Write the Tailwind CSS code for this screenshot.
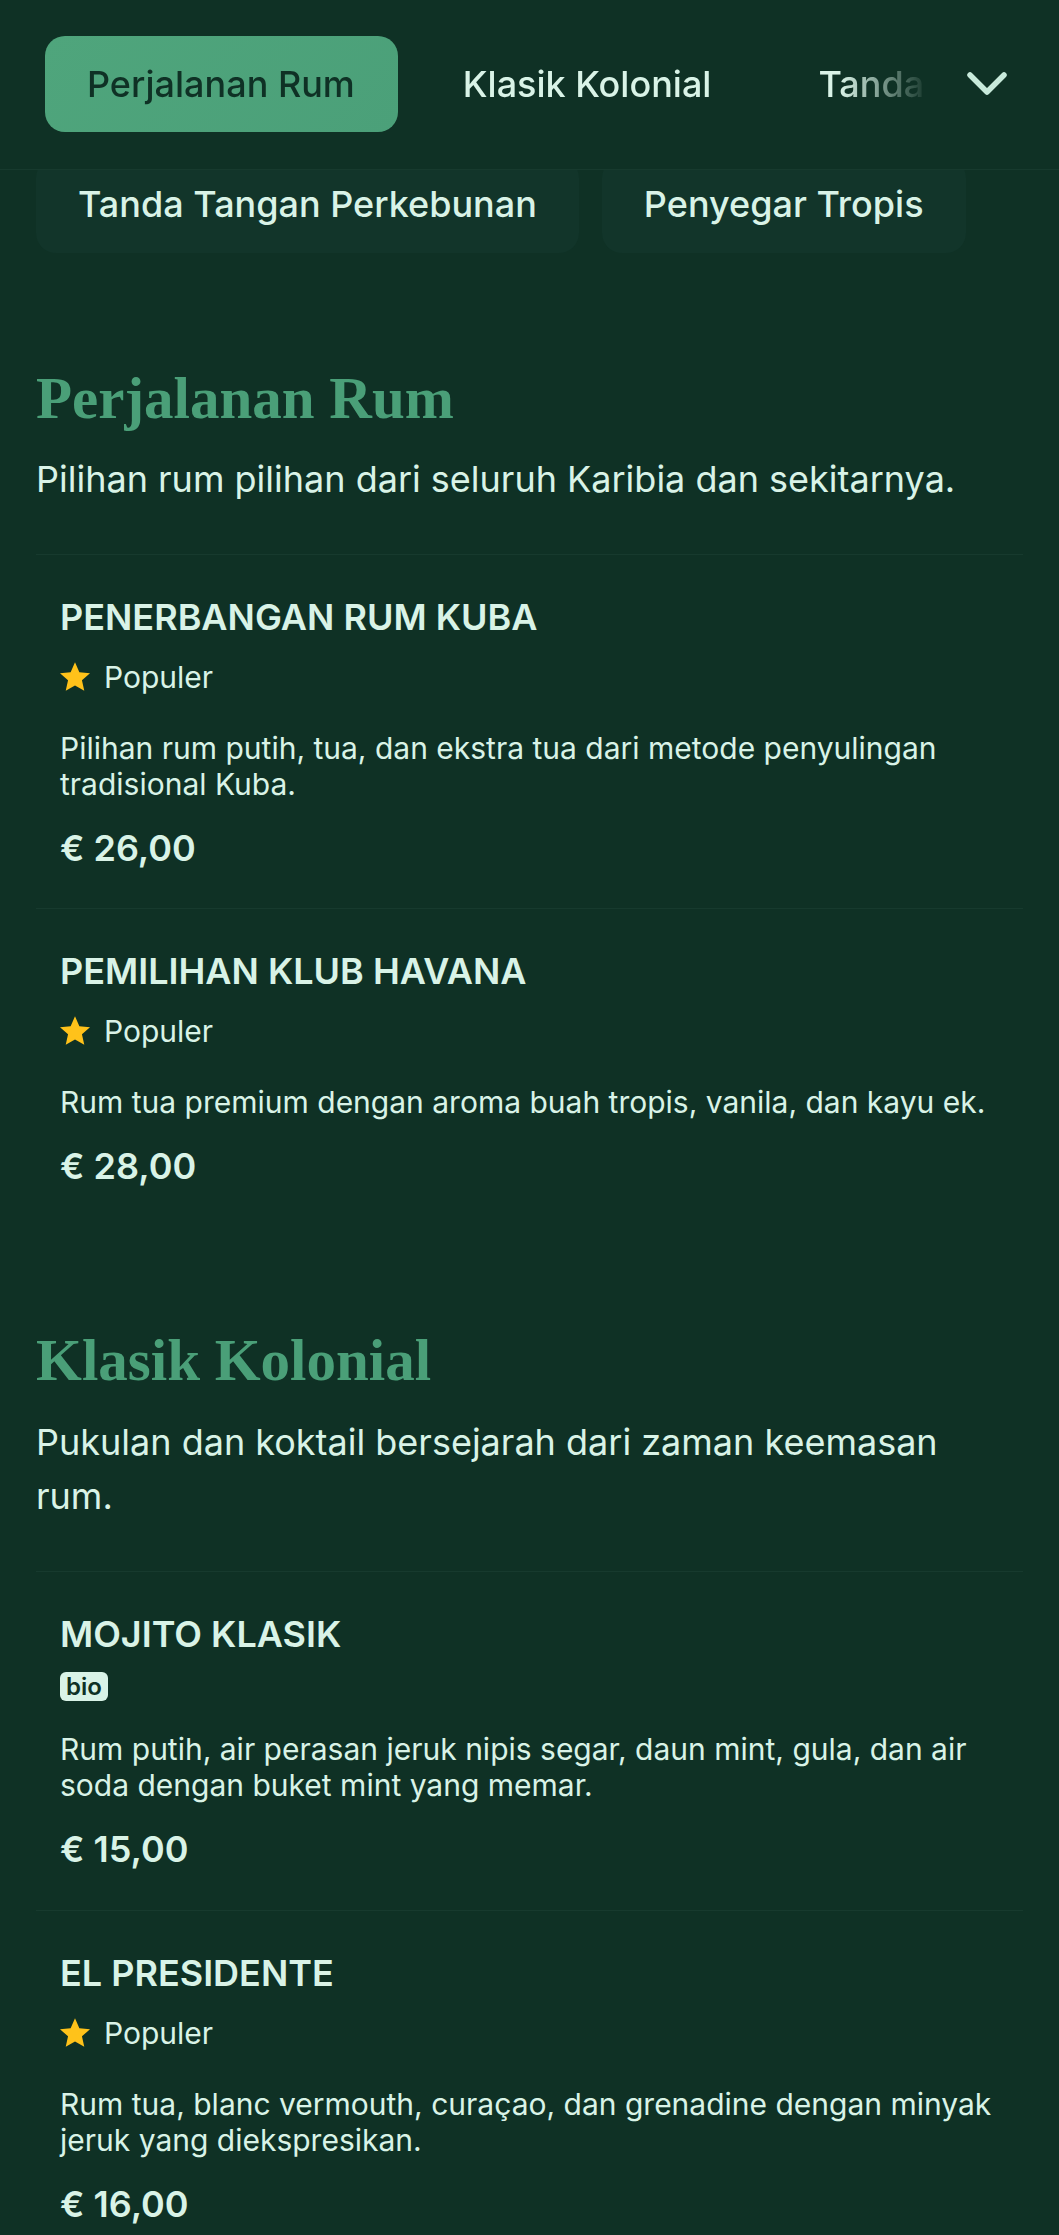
<!DOCTYPE html>
<html lang="id">
<head>
  <meta charset="UTF-8" />
  <title>Menu</title>
  <script src="https://cdn.jsdelivr.net/npm/@tailwindcss/browser@4"></script>
</head>
<body class="bg-[#0f3125] text-[#d9f3e7] font-['Inter',sans-serif] overflow-hidden">
  <div class="h-[2235px] overflow-hidden">
    <header class="relative z-10 h-[170px] bg-[#0f3125] border-b border-[#173a2e] flex items-start">
      <div class="flex-1 min-w-0 overflow-hidden pl-[45px] pt-[36px] flex gap-[23px] [mask-image:linear-gradient(to_right,black_840px,transparent_930px)]">
        <div class="shrink-0 h-[96px] pl-[42px] pr-[43px] flex items-center rounded-[20px] bg-[linear-gradient(135deg,#4fa57c,#4ba079)] text-[#0f3125] text-[36px] font-medium">Perjalanan Rum</div>
        <div class="shrink-0 h-[96px] px-[42px] flex items-center text-[36px] font-medium">Klasik Kolonial</div>
        <div class="shrink-0 h-[96px] px-[42px] flex items-center text-[36px] font-medium">Tanda Tangan Perkebunan</div>
      </div>
      <div class="w-[132px] h-[166px] shrink-0 flex items-center justify-center">
        <svg class="w-[40px] h-[23px] ml-[-12px]" viewBox="0 0 40 23" fill="none" stroke="#c8eadb" stroke-width="5.500" stroke-linecap="round" stroke-linejoin="round"><path d="M3 3l17 17L37 3" /></svg>
      </div>
    </header>

    <div class="-mt-[12px] pl-[36px] flex gap-[23px]">
      <div class="h-[95px] pb-[4px] px-[42px] flex items-center rounded-[20px] bg-[#12352a] text-[36px] font-medium">Tanda Tangan Perkebunan</div>
      <div class="h-[95px] pb-[4px] px-[42px] flex items-center rounded-[20px] bg-[#12352a] text-[36px] font-medium">Penyegar Tropis</div>
    </div>

    <main class="px-[36px]">
      <section class="pt-[109px]">
        <h2 class="font-['Liberation_Serif',serif] font-bold text-[#4a9f78] text-[59px] leading-[72px]">Perjalanan Rum</h2>
        <p class="mt-[18px] text-[36px] leading-[54px]">Pilihan rum pilihan dari seluruh Karibia dan sekitarnya.</p>
        <div class="mt-[48px]">
          <article class="border-t border-[#173a2e] px-[24px] h-[354px] pt-[42px]">
            <h3 class="text-[36px] leading-[40px] font-semibold">PENERBANGAN RUM KUBA</h3>
            <div class="mt-[20px] h-[40px] flex items-center gap-[14px] text-[30px]">
              <svg class="w-[30px] h-[30px]" viewBox="1 1.5 22 21.5" fill="#ffc21a"><path d="M12 1.500l3.200 7.200 7.800.8-5.900 5.200 1.700 7.700L12 18.400l-6.800 4 1.700-7.700L1 9.500l7.800-.8z" /></svg>
              <span>Populer</span>
            </div>
            <p class="mt-[33px] text-[30px] leading-[36px]">Pilihan rum putih, tua, dan ekstra tua dari metode penyulingan tradisional Kuba.</p>
            <p class="mt-[24px] text-[36px] leading-[44px] font-semibold">€ 26,00</p>
          </article>
          <article class="border-t border-[#173a2e] px-[24px] pt-[42px]">
            <h3 class="text-[36px] leading-[40px] font-semibold">PEMILIHAN KLUB HAVANA</h3>
            <div class="mt-[20px] h-[40px] flex items-center gap-[14px] text-[30px]">
              <svg class="w-[30px] h-[30px]" viewBox="1 1.5 22 21.5" fill="#ffc21a"><path d="M12 1.500l3.200 7.200 7.800.8-5.900 5.200 1.700 7.700L12 18.400l-6.800 4 1.700-7.700L1 9.500l7.800-.8z" /></svg>
              <span>Populer</span>
            </div>
            <p class="mt-[33px] text-[30px] leading-[36px]">Rum tua premium dengan aroma buah tropis, vanila, dan kayu ek.</p>
            <p class="mt-[24px] text-[36px] leading-[44px] font-semibold">€ 28,00</p>
          </article>
        </div>
      </section>

      <section class="pt-[136px]">
        <h2 class="font-['Liberation_Serif',serif] font-bold text-[#4a9f78] text-[59px] leading-[72px]">Klasik Kolonial</h2>
        <p class="mt-[19px] text-[36px] leading-[54px]">Pukulan dan koktail bersejarah dari zaman keemasan rum.</p>
        <div class="mt-[48px]">
          <article class="border-t border-[#173a2e] px-[24px] h-[339px] pt-[42px]">
            <h3 class="text-[36px] leading-[40px] font-semibold">MOJITO KLASIK</h3>
            <div class="mt-[18px] h-[29px] flex items-center">
              <span class="w-[48px] h-[29px] flex items-center justify-center rounded-[6px] bg-[#d9f3e7] text-[#0f3125] text-[24px] font-semibold">bio</span>
            </div>
            <p class="mt-[30px] text-[30px] leading-[36px]">Rum putih, air perasan jeruk nipis segar, daun mint, gula, dan air soda dengan buket mint yang memar.</p>
            <p class="mt-[24px] text-[36px] leading-[44px] font-semibold">€ 15,00</p>
          </article>
          <article class="border-t border-[#173a2e] px-[24px] pt-[42px]">
            <h3 class="text-[36px] leading-[40px] font-semibold">EL PRESIDENTE</h3>
            <div class="mt-[20px] h-[40px] flex items-center gap-[14px] text-[30px]">
              <svg class="w-[30px] h-[30px]" viewBox="1 1.5 22 21.5" fill="#ffc21a"><path d="M12 1.500l3.200 7.200 7.800.8-5.900 5.200 1.700 7.700L12 18.400l-6.800 4 1.700-7.700L1 9.500l7.800-.8z" /></svg>
              <span>Populer</span>
            </div>
            <p class="mt-[33px] text-[30px] leading-[36px]">Rum tua, blanc vermouth, curaçao, dan grenadine dengan minyak jeruk yang diekspresikan.</p>
            <p class="mt-[24px] text-[36px] leading-[44px] font-semibold">€ 16,00</p>
          </article>
        </div>
      </section>
    </main>
  </div>
</body>
</html>
